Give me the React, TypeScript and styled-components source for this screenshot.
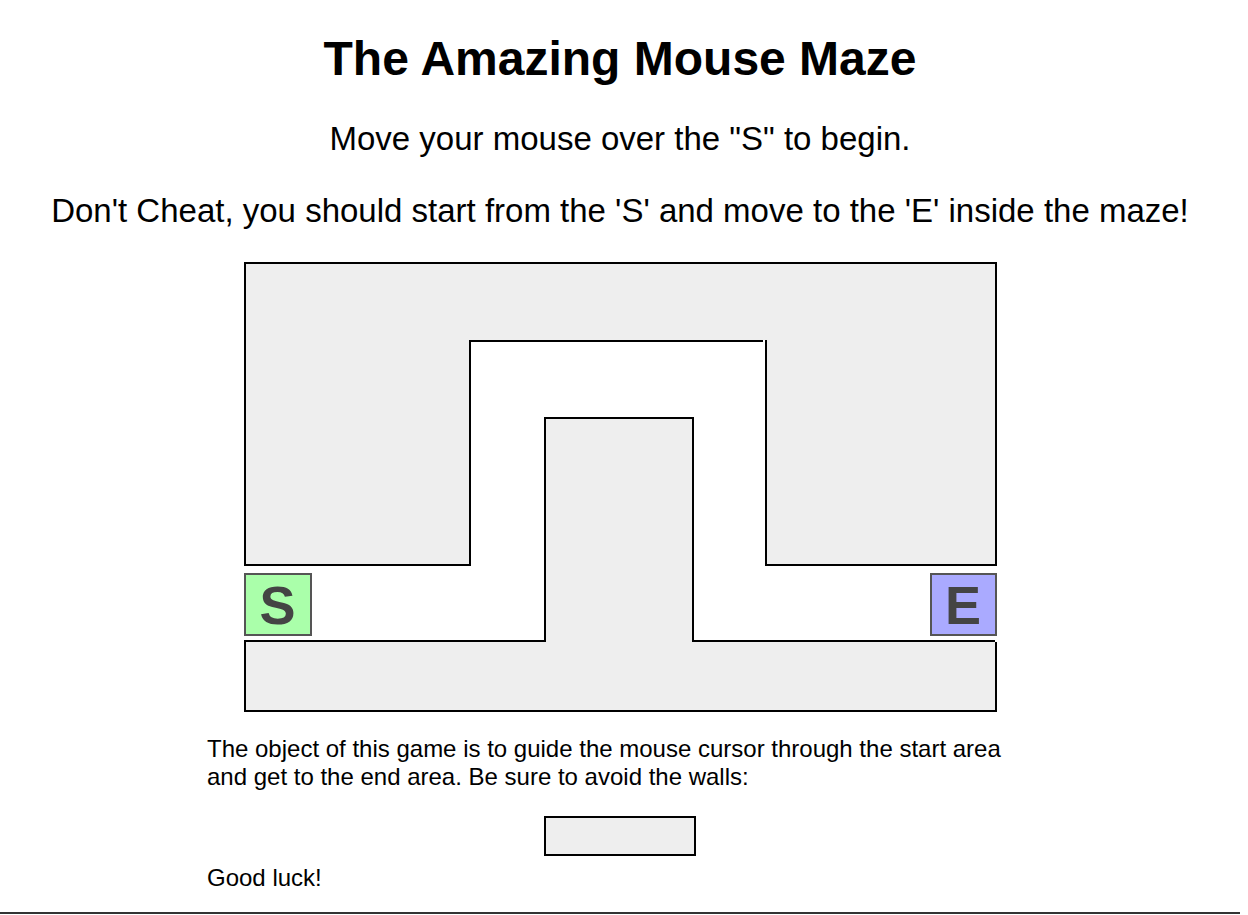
import { createGlobalStyle, styled } from 'styled-components';

const GlobalStyle = createGlobalStyle`
  html, body {
    margin: 0;
    padding: 0;
    background: #fff;
  }
  body {
    font-family: "Liberation Sans", Arial, sans-serif;
    color: #000;
  }
`;

const Page = styled.main`
  width: 1240px;
  display: flex;
  flex-direction: column;
  align-items: center;
`;

const Title = styled.h1`
  margin: 31px 0 0;
  font-size: 48px;
  line-height: 56px;
  font-weight: 700;
`;

const Lead = styled.p<{ $gap: number }>`
  margin: ${(p) => p.$gap}px 0 0;
  font-size: 33px;
  line-height: 38px;
  text-align: center;
`;

// the maze is a free canvas: each wall sits where the level puts it
const Maze = styled.div`
  position: relative;
  width: 753px;
  height: 450px;
  margin-top: 32px;
`;

type Box = { $x: number; $y: number; $w: number; $h: number };

const Wall = styled.div<Box & { $sides: string }>`
  position: absolute;
  box-sizing: border-box;
  left: ${(p) => p.$x}px;
  top: ${(p) => p.$y}px;
  width: ${(p) => p.$w}px;
  height: ${(p) => p.$h}px;
  background: #eee;
  border-style: solid;
  border-color: #000;
  border-width: ${(p) =>
    ['t', 'r', 'b', 'l'].map((s) => (p.$sides.includes(s) ? '2px' : '0')).join(' ')};
`;

const Rail = styled.div<Box>`
  position: absolute;
  left: ${(p) => p.$x}px;
  top: ${(p) => p.$y}px;
  width: ${(p) => p.$w}px;
  height: ${(p) => p.$h}px;
  background: #000;
`;

const Pad = styled.div<{ $x: number; $w: number; $tone: string }>`
  position: absolute;
  box-sizing: border-box;
  left: ${(p) => p.$x}px;
  top: 311px;
  width: ${(p) => p.$w}px;
  height: 63px;
  border: 2px solid #555;
  background: ${(p) => p.$tone};
  color: #444;
  font-size: 54px;
  font-weight: 700;
  display: flex;
  align-items: center;
  justify-content: center;
`;

const Instructions = styled.div`
  width: 826px;
  margin-top: 23px;
  font-size: 24px;
  line-height: 28px;
  display: flex;
  flex-direction: column;
`;

const Copy = styled.p`
  margin: 0;
`;

const Sample = styled.div`
  align-self: center;
  box-sizing: border-box;
  width: 152px;
  height: 40px;
  margin: 25px 0 8px;
  border: 2px solid #000;
  background: #eee;
`;

const Divider = styled.hr`
  width: 100%;
  margin: 20px 0 0;
  border: 0;
  border-top: 2px solid #333;
`;

const App = () => (
  <Page>
    <GlobalStyle />
    <Title>The Amazing Mouse Maze</Title>
    <Lead $gap={33}>Move your mouse over the "S" to begin.</Lead>
    <Lead $gap={34}>Don't Cheat, you should start from the 'S' and move to the 'E' inside the maze!</Lead>

    <Maze>
      <Wall $x={0} $y={0} $w={753} $h={78} $sides="tlr" />
      <Wall $x={0} $y={78} $w={227} $h={226} $sides="lrb" />
      <Wall $x={521} $y={78} $w={232} $h={226} $sides="lrb" />
      <Rail $x={225} $y={78} $w={294} $h={2} />
      <Wall $x={0} $y={380} $w={753} $h={70} $sides="lrb" />
      <Wall $x={300} $y={155} $w={150} $h={225} $sides="tlr" />
      <Rail $x={0} $y={378} $w={302} $h={2} />
      <Rail $x={448} $y={378} $w={303} $h={2} />
      <Pad $x={0} $w={68} $tone="#aaffaa">S</Pad>
      <Pad $x={686} $w={67} $tone="#aaaaff">E</Pad>
    </Maze>

    <Instructions>
      <Copy>
        The object of this game is to guide the mouse cursor through the start area and get to the
        end area. Be sure to avoid the walls:
      </Copy>
      <Sample />
      <Copy>Good luck!</Copy>
    </Instructions>
    <Divider />
  </Page>
);

export default App;
